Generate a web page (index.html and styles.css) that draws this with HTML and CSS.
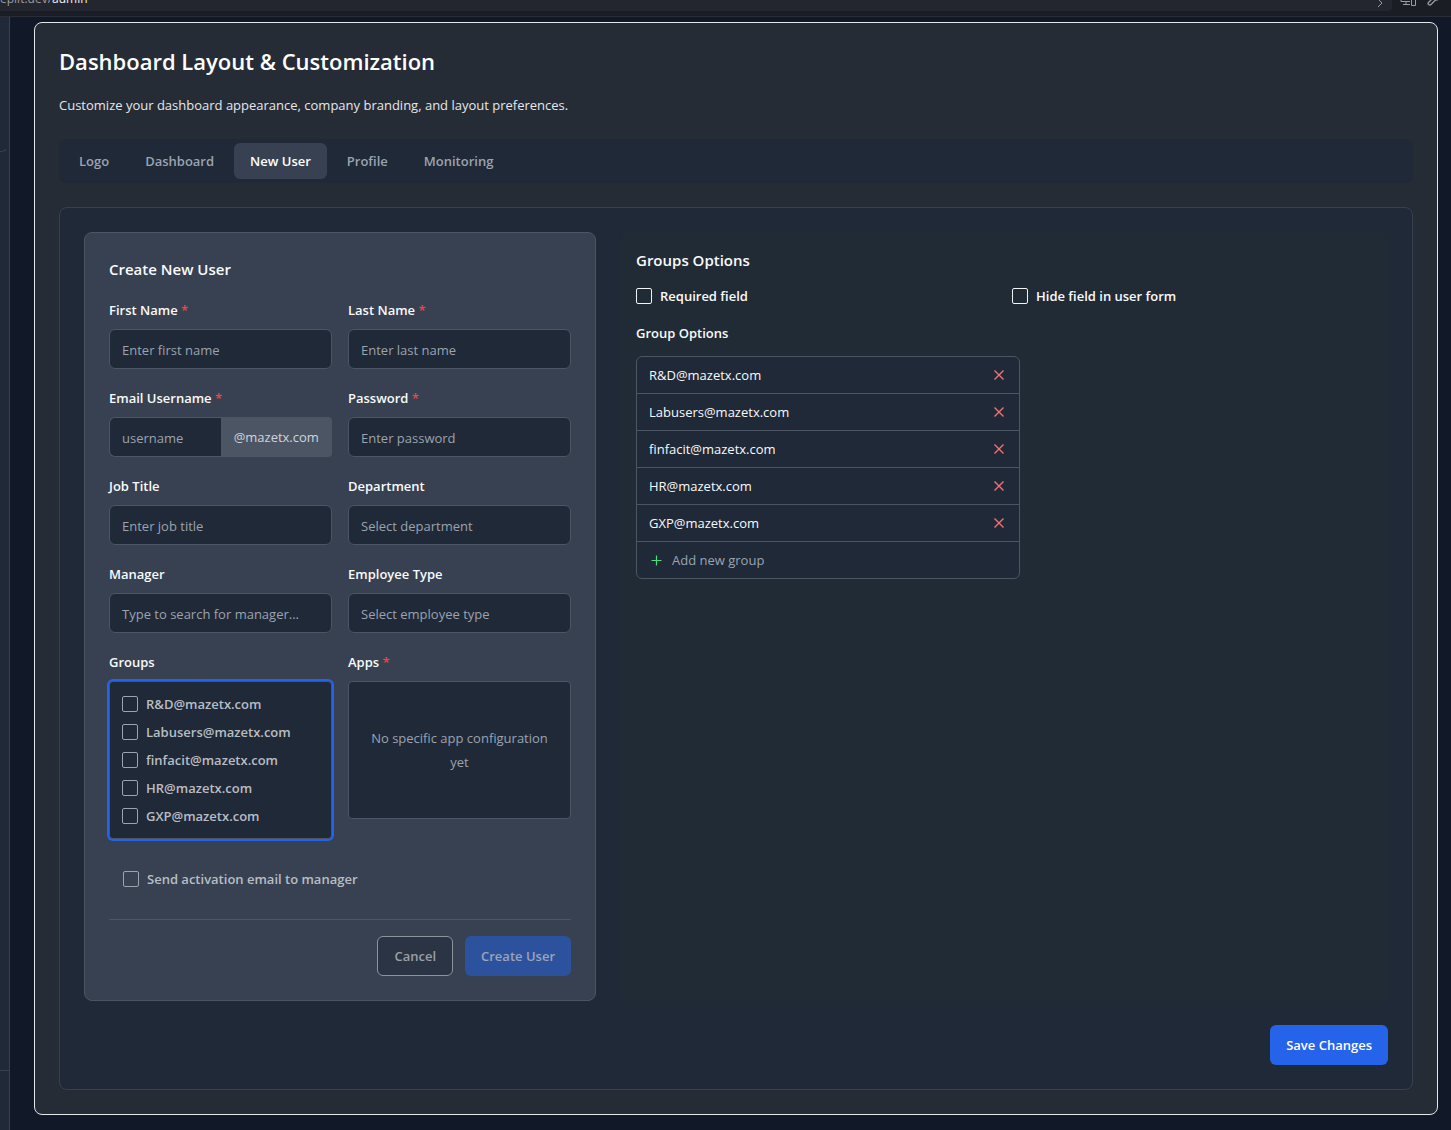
FILE: index.html
```html
<!DOCTYPE html>
<html lang="en">
<head>
<meta charset="utf-8">
<meta name="viewport" content="width=device-width, initial-scale=1">
<title>Dashboard Layout &amp; Customization</title>
<link rel="stylesheet" href="styles.css">
</head>
<body>
<svg class="sprite" aria-hidden="true">
  <symbol id="icon-x" viewBox="0 0 16 16"><path d="M3.500 3.500l9 9M12.500 3.500l-9 9" stroke-width="1.400"/></symbol>
  <symbol id="icon-plus" viewBox="0 0 15 15"><path d="M7.500 2.500v10M2.500 7.500h10" stroke-width="1.200"/></symbol>
</svg>
<header class="browser-bar">
  <div class="address"><span class="host">eplit.dev/<b>admin</b></span>
    <svg class="address-icon" width="12" height="14" viewBox="0 0 12 14"><path d="M2 14l4-4-4-4"/></svg>
  </div>
  <div class="browser-tools">
    <svg width="17" height="16" viewBox="0 0 17 16"><path d="M1 3v8.500h9M6 12v2.500M3 14.500h7M11.500 6h4v9.500h-4z"/></svg>
    <svg width="14" height="16" viewBox="0 0 14 16"><path d="M1.500 14.500c-1-1 0-2 0-2l5-5c-1-3 1-6 4-6l-2 3 2 2 3-2c0 3-2 6-5 5.500l-4.500 4.500s-1 1-2.500 0z" stroke-width="1.300"/></svg>
  </div>
</header>
<div class="shell">
  <aside class="sidebar">
    <div class="sidebar-top"></div>
    <div class="sidebar-foot"></div>
  </aside>
  <main class="main">
    <section class="card">
      <h1>Dashboard Layout &amp; Customization</h1>
      <p class="lead">Customize your dashboard appearance, company branding, and layout preferences.</p>
      <div class="tabs" role="tablist">
        <button class="tab" role="tab" type="button">Logo</button>
        <button class="tab" role="tab" type="button">Dashboard</button>
        <button class="tab active" role="tab" type="button" aria-selected="true">New User</button>
        <button class="tab" role="tab" type="button">Profile</button>
        <button class="tab" role="tab" type="button">Monitoring</button>
      </div>
      <div class="panel">
        <div class="columns">
          <form class="user-form">
            <h2>Create New User</h2>
            <div class="fields">
              <div class="field">
                <label for="first">First Name <span class="req">*</span></label>
                <input class="control" id="first" type="text" placeholder="Enter first name">
              </div>
              <div class="field">
                <label for="last">Last Name <span class="req">*</span></label>
                <input class="control" id="last" type="text" placeholder="Enter last name">
              </div>
              <div class="field">
                <label for="email">Email Username <span class="req">*</span></label>
                <div class="joined">
                  <input class="control" id="email" type="text" placeholder="username">
                  <span class="addon">@mazetx.com</span>
                </div>
              </div>
              <div class="field">
                <label for="password">Password <span class="req">*</span></label>
                <input class="control" id="password" type="password" placeholder="Enter password">
              </div>
              <div class="field">
                <label for="job">Job Title</label>
                <input class="control" id="job" type="text" placeholder="Enter job title">
              </div>
              <div class="field">
                <label for="department">Department</label>
                <select class="control" id="department"><option>Select department</option></select>
              </div>
              <div class="field">
                <label for="manager">Manager</label>
                <input class="control" id="manager" type="text" placeholder="Type to search for manager...">
              </div>
              <div class="field">
                <label for="type">Employee Type</label>
                <select class="control" id="type"><option>Select employee type</option></select>
              </div>
              <div class="field" role="group" aria-labelledby="groups-label">
                <span class="label" id="groups-label">Groups</span>
                <div class="group-box">
                  <label class="check"><input type="checkbox">R&amp;D@mazetx.com</label>
                  <label class="check"><input type="checkbox">Labusers@mazetx.com</label>
                  <label class="check"><input type="checkbox">finfacit@mazetx.com</label>
                  <label class="check"><input type="checkbox">HR@mazetx.com</label>
                  <label class="check"><input type="checkbox">GXP@mazetx.com</label>
                </div>
              </div>
              <div class="field">
                <span class="label">Apps <span class="req">*</span></span>
                <div class="apps-box">No specific app configuration yet</div>
              </div>
            </div>
            <label class="check activation"><input type="checkbox">Send activation email to manager</label>
            <div class="actions">
              <button class="button cancel" type="button">Cancel</button>
              <button class="button create" type="button">Create User</button>
            </div>
          </form>
          <section class="options">
            <h2>Groups Options</h2>
            <div class="option-checks">
              <label class="check bright"><input type="checkbox">Required field</label>
              <label class="check bright"><input type="checkbox">Hide field in user form</label>
            </div>
            <h3>Group Options</h3>
            <ul class="group-list">
              <li>R&amp;D@mazetx.com<button class="remove" type="button" aria-label="Remove"><svg><use href="#icon-x"/></svg></button></li>
              <li>Labusers@mazetx.com<button class="remove" type="button" aria-label="Remove"><svg><use href="#icon-x"/></svg></button></li>
              <li>finfacit@mazetx.com<button class="remove" type="button" aria-label="Remove"><svg><use href="#icon-x"/></svg></button></li>
              <li>HR@mazetx.com<button class="remove" type="button" aria-label="Remove"><svg><use href="#icon-x"/></svg></button></li>
              <li>GXP@mazetx.com<button class="remove" type="button" aria-label="Remove"><svg><use href="#icon-x"/></svg></button></li>
              <li><label class="add"><svg><use href="#icon-plus"/></svg><input type="text" placeholder="Add new group" aria-label="Add new group"></label></li>
            </ul>
          </section>
        </div>
        <div class="save-row"><button class="button save" type="button">Save Changes</button></div>
      </div>
    </section>
  </main>
</div>
</body>
</html>
```
FILE: styles.css
```css
*, *::before, *::after { box-sizing: border-box; }

body {
  margin: 0;
  min-height: 100vh;
  display: flex;
  flex-direction: column;
  background: #111827;
  color: #f9fafb;
  font: 13px/24px "Open Sans", "Noto Sans", sans-serif;
}

h1, h2, h3, p, ul { margin: 0; padding: 0; }
button, input, select { font: inherit; color: inherit; }
svg { fill: none; stroke: currentColor; flex: none; }
.sprite { display: none; }

.browser-bar {
  display: flex;
  height: 17px;
  padding-right: 10px;
  gap: 8px;
  background: #1b1d25;
  border-bottom: 1px solid #2a2d35;
  color: #9a9ca3;
  overflow: hidden;
}
.address {
  flex: 1;
  height: 11px;
  display: flex;
  align-items: flex-end;
  justify-content: space-between;
  padding: 0 4px 4px 0;
  background: #23262e;
  border-radius: 0 0 4px 0;
  overflow: hidden;
  font-size: 12px;
  line-height: 16px;
}
.host b { color: #f1f1f3; font-weight: 400; }
.browser-tools {
  display: flex;
  align-items: flex-end;
  gap: 10px;
  height: 6px;
}

.shell { flex: 1; display: flex; }
.sidebar {
  width: 10px;
  flex: none;
  display: flex;
  flex-direction: column;
  justify-content: space-between;
  background: #1f2937;
  border-right: 1px solid #374151;
}
.sidebar-top {
  height: 135px;
  border: solid #374151;
  border-width: 0 1px 1px 0;
  border-right-color: transparent;
  border-radius: 0 0 8px 0;
}
.sidebar-foot { height: 60px; border-top: 1px solid #374151; }

.main { flex: 1; min-width: 0; padding: 5px 13px 15px 24px; }
.card {
  padding: 24px;
  background: #252c36;
  border: 1px solid #e5e7eb;
  border-radius: 8px;
}
h1 { font-size: 22px; line-height: 28px; font-weight: 600; color: #fff; }
.lead { margin-top: 20px; line-height: 20px; color: #e5e7eb; }

.tabs {
  display: flex;
  gap: 4px;
  margin-top: 24px;
  padding: 4px;
  background: #1f2937;
  border-radius: 6px;
}
.tab {
  height: 36px;
  padding: 0 16px;
  border: 0;
  border-radius: 6px;
  background: none;
  color: #9ca3af;
  font-weight: 600;
}
.tab.active { background: #374151; color: #fff; }

.panel {
  margin-top: 24px;
  padding: 24px;
  background: #1f2937;
  border: 1px solid #374151;
  border-radius: 8px;
}
.columns { display: grid; grid-template-columns: 2fr 3fr; gap: 24px; }
h2 { font-size: 15px; line-height: 24px; font-weight: 600; }
h3, .field > label, .label { font-size: 13px; line-height: 26px; font-weight: 600; }

.user-form {
  padding: 24px;
  background: #374151;
  border: 1px solid #4b5563;
  border-radius: 8px;
}
.fields {
  display: grid;
  grid-template-columns: 1fr 1fr;
  align-items: start;
  gap: 16px;
  margin-top: 16px;
}
.field { display: flex; flex-direction: column; gap: 6px; min-width: 0; }
.req { color: #ef4444; }
.control {
  width: 100%;
  height: 40px;
  padding: 2px 12px 0;
  background: #1f2937;
  border: 1px solid #4b5563;
  border-radius: 6px;
  appearance: none;
}
.control::placeholder, select.control { color: #9ca3af; opacity: 1; }
.joined { display: grid; grid-template-columns: 1fr 1fr; }
.joined .control { border-radius: 6px 0 0 6px; border-right: 0; }
.addon {
  display: flex;
  align-items: center;
  justify-content: center;
  background: #4b5563;
  border-radius: 0 4px 4px 0;
  color: #d1d5db;
}

.group-box, .apps-box {
  background: #1f2937;
  border: 1px solid #4b5563;
  border-radius: 4px;
  padding: 12px;
}
.group-box {
  display: flex;
  flex-direction: column;
  gap: 8px;
  box-shadow: 0 0 0 2px #2563eb;
}
.apps-box {
  min-height: 138px;
  display: flex;
  align-items: center;
  text-align: center;
  color: #9ca3af;
}
.check {
  display: flex;
  align-items: center;
  gap: 8px;
  line-height: 20px;
  font-weight: 600;
  color: #b9bdc3;
}
.check input {
  appearance: none;
  width: 16px;
  height: 16px;
  flex: none;
  margin: 0;
  border: 1px solid #9ca3af;
  border-radius: 2px;
}
.check.bright { color: #f9fafb; line-height: 24px; }
.check.bright input { border-color: #f3f4f6; }
.activation { margin: 16px 0; padding: 12px 14px; line-height: 24px; }
.actions {
  display: flex;
  justify-content: flex-end;
  gap: 12px;
  padding-top: 16px;
  border-top: 1px solid #4b5563;
}
.button {
  height: 40px;
  padding: 0 16px;
  border: 0;
  border-radius: 6px;
  font-weight: 600;
}
.cancel { background: #2b3444; border: 1px solid #8e9299; color: #9b9fa6; }
.create { background: #2d529d; color: #9aa4ba; }
.save { background: #2563eb; color: #fff; }

.options { padding: 16px; background: #212b36; border-radius: 8px; }
.option-checks {
  display: grid;
  grid-template-columns: 1fr 1fr;
  gap: 16px;
  margin: 12px 0;
}
.group-list {
  max-width: 384px;
  margin-top: 10px;
  list-style: none;
  background: #1f2937;
  border: 1px solid #4b5563;
  border-radius: 6px;
}
.group-list li {
  display: flex;
  align-items: center;
  justify-content: space-between;
  min-height: 36px;
  padding: 0 12px;
}
.group-list li + li { min-height: 37px; border-top: 1px solid #4b5563; }
.remove { display: flex; padding: 0; border: 0; background: none; color: #f87171; }
.remove svg { width: 16px; height: 16px; }
.add { display: flex; flex: 1; align-items: center; gap: 8px; color: #4ade80; }
.add svg { width: 15px; height: 15px; }
.add input { flex: 1; min-width: 0; padding: 0; border: 0; background: none; outline: 0; color: #f9fafb; }
.add input::placeholder { color: #9ca3af; opacity: 1; }
.save-row { display: flex; justify-content: flex-end; margin-top: 24px; }
```
